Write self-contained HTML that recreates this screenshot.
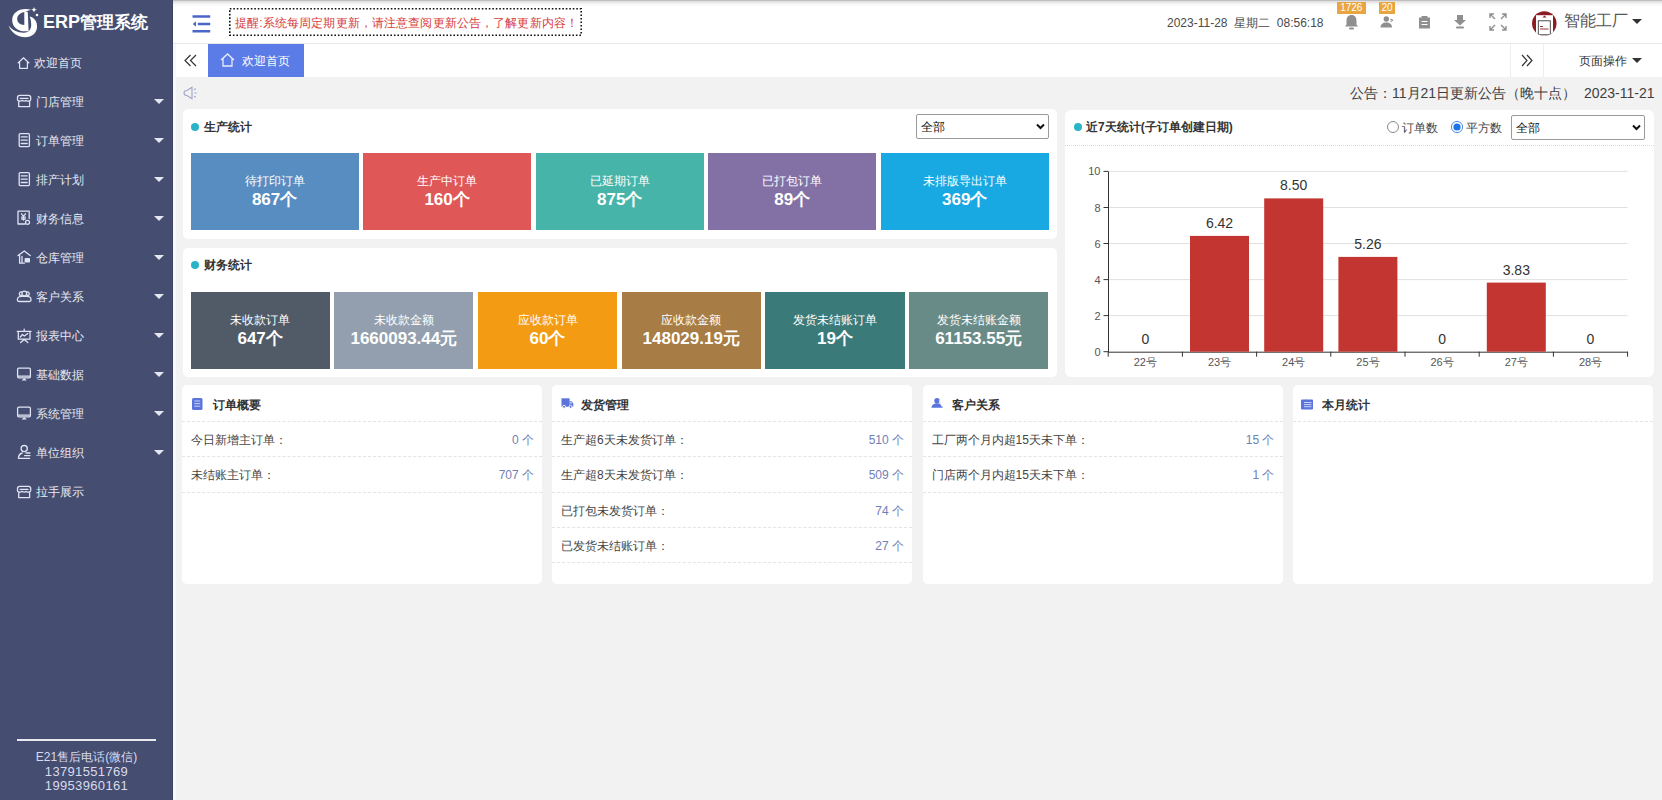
<!DOCTYPE html>
<html><head><meta charset="utf-8">
<style>
*{margin:0;padding:0;box-sizing:border-box}
html,body{width:1662px;height:800px;overflow:hidden;background:#f2f2f2;font-family:"Liberation Sans",sans-serif;color:#333;font-size:12px}
.abs{position:absolute}
#side{position:absolute;left:0;top:0;width:173px;height:800px;background:#454d70}
#logo{position:absolute;left:43px;top:11px;color:#fff;font-weight:bold;font-size:18px;line-height:22px;white-space:nowrap}#logo span{font-size:17px}
.mi{position:absolute;left:0;width:173px;height:39px;color:#e6e8f0;font-size:12px}
.mi .ic{position:absolute;left:17px;top:14.5px;width:13px;height:13px}
.mi .tx{position:absolute;left:34px;top:1.5px;line-height:39px}
.mi .car{position:absolute;left:154px;top:18px;width:0;height:0;border-left:5px solid transparent;border-right:5px solid transparent;border-top:5px solid #e6e8f0}
#foot{position:absolute;left:0;top:739px;width:173px}
#foot .ln{position:absolute;left:17px;top:0;width:139px;height:2px;background:#e8e8ee}
#foot .t{position:absolute;left:0;width:173px;text-align:center;color:#d8dbee;font-size:12px;line-height:14px}
#hdr{position:absolute;left:173px;top:0;width:1489px;height:44px;background:#fff;border-bottom:1px solid #e8e8e8}
#hdr .shadow{position:absolute;left:0;top:0;width:100%;height:8px;background:linear-gradient(#b0b0b0,#e0e0e0 1.5px,#f6f6f6 4px,#fff 7px)}
#notice{position:absolute;left:229px;top:9px;width:353px;height:28px;color:#d63c3c;font-size:12px;line-height:28px;padding-left:6px;white-space:nowrap;letter-spacing:0.13px}
#tabs{position:absolute;left:173px;top:44px;width:1489px;height:33px;background:#fff}
.card{position:absolute;background:#fff;border-radius:6px}
.ctitle{position:absolute;font-weight:bold;font-size:12px;color:#333;white-space:nowrap}
.dot{position:absolute;width:8px;height:8px;border-radius:50%;background:#2bb4c8}
.box{position:absolute;color:#fff;text-align:center}
.box .l{position:absolute;left:0;width:100%;top:21px;font-size:12px;line-height:14px}
.box .v{position:absolute;left:0;width:100%;top:37px;font-size:17px;font-weight:bold;line-height:19px}
.sel{position:absolute;border:1px solid #9a9a9a;border-radius:2px;background:#fff;font-size:12px;color:#111;padding-left:4px;padding-top:1px}
.sel .chev{position:absolute;right:3.5px;top:8px;width:9px;height:7px}
.bc .ht{position:absolute;left:31px;top:12.5px;font-weight:bold;font-size:12px;line-height:14px}
.bc .hi{position:absolute;left:10px;top:13px}
.bc .sep{position:absolute;left:0;width:100%;height:0;border-top:1px dashed #e4e4e4}
.bc .row{position:absolute;left:9px;right:8px;height:35px;line-height:37px;font-size:12px;color:#444}
.bc .row .n{position:absolute;right:0;top:0;color:#6f80b8}
</style></head><body>

<div id="side">
  <svg class="abs" style="left:5px;top:3px" width="40" height="40" viewBox="0 0 40 40">
    <path d="M26 6.8 C18 4.5 8.5 7.5 7.3 15.5 C6.5 22 10.5 27 17 28.2 L23.6 28.2 L22.8 9.2 C22 8.6 20 8.8 19.2 9 C14.5 10 12 13 12.2 16.5 C12.4 19.5 15 21.8 19.3 22 L19.3 9 Z" fill="#fff" fill-rule="evenodd"/>
    <path d="M24.5 13.5 C29.5 14.5 32.5 19 32 24.5 C31.5 30 27 34.2 20.5 34.2 C13 34.2 6.5 30 3.5 22.5 C7 27 12.5 29.8 19 29.7 C24 29.5 26.5 26 26.2 21 C26 17.5 25.5 15 24.5 13.5 Z" fill="#fff"/>
    <path d="M29 4 L29.8 6 L31.8 6.8 L29.8 7.6 L29 9.6 L28.2 7.6 L26.2 6.8 L28.2 6 Z" fill="#fff"/>
    <circle cx="32" cy="12" r="1.3" fill="#fff"/>
  </svg>
  <div id="logo">ERP<span>管理系统</span></div>

  <div class="mi" style="top:42px"><svg class="abs" style="left:17px;top:14.5px" width="13" height="12" viewBox="0 0 13 12"><path d="M0.8 6.2 L6.5 0.8 L12.2 6.2 M2.6 4.8 V11.3 H10.4 V4.8" fill="none" stroke="#dfe3f3" stroke-width="1.2" stroke-linejoin="round"/></svg><span class="tx" style="left:33.7px">欢迎首页</span></div>
  <div class="mi" style="top:81px"><svg class="abs" style="left:12px;top:9px" width="20" height="20" viewBox="0 0 20 20"><path d="M7 11 Q5.5 11 5.5 9.5 V7.5 Q5.5 5.3 7.7 5.3 H16.5 Q18.7 5.3 18.7 7.5 V9.5 Q18.7 11 17.2 11 Q15.5 11.4 14.2 10.4 Q12.2 11.8 10.2 10.4 Q8.7 11.4 7 11 Z M8.2 8.4 H16 M6.7 11.8 V16.6 H17.6 V11.8" stroke="#dfe3f3" fill="none" stroke-width="1.3" stroke-linecap="round" stroke-linejoin="round"/></svg><span class="tx" style="left:35.5px">门店管理</span><i class="car"></i></div>
  <div class="mi" style="top:120px"><svg class="abs" style="left:12px;top:10px" width="20" height="20" viewBox="0 0 20 20"><rect x="7.2" y="3.6" width="10.2" height="13" rx="1" stroke="#dfe3f3" fill="none" stroke-width="1.3" stroke-linecap="round" stroke-linejoin="round"/><path d="M9.2 6.8 H15.2 M9.2 10.2 H15.2 M9.2 13.5 H15.2" stroke="#dfe3f3" fill="none" stroke-width="1.3" stroke-linecap="round" stroke-linejoin="round" stroke-width="1.1"/></svg><span class="tx" style="left:35.5px">订单管理</span><i class="car"></i></div>
  <div class="mi" style="top:159px"><svg class="abs" style="left:12px;top:10px" width="20" height="20" viewBox="0 0 20 20"><rect x="7.2" y="3.6" width="10.2" height="13" rx="1" stroke="#dfe3f3" fill="none" stroke-width="1.3" stroke-linecap="round" stroke-linejoin="round"/><path d="M9.2 6.8 H15.2 M9.2 10.2 H15.2 M9.2 13.5 H15.2" stroke="#dfe3f3" fill="none" stroke-width="1.3" stroke-linecap="round" stroke-linejoin="round" stroke-width="1.1"/></svg><span class="tx" style="left:35.5px">排产计划</span><i class="car"></i></div>
  <div class="mi" style="top:198px"><svg class="abs" style="left:12px;top:9px" width="20" height="20" viewBox="0 0 20 20"><path d="M13 17 H6 V4.2 H17.2 V11.5" stroke="#dfe3f3" fill="none" stroke-width="1.3" stroke-linecap="round" stroke-linejoin="round"/><path d="M9.5 6.8 L11.5 9.2 L13.5 6.8 M11.5 9.2 V13 M9.6 10.2 H13.4 M9.6 12 H13.4" stroke="#dfe3f3" fill="none" stroke-width="1.3" stroke-linecap="round" stroke-linejoin="round" stroke-width="1.1"/><circle cx="15.5" cy="15.3" r="2" stroke="#dfe3f3" fill="none" stroke-width="1.3" stroke-linecap="round" stroke-linejoin="round" stroke-width="1.5"/></svg><span class="tx" style="left:35.5px">财务信息</span><i class="car"></i></div>
  <div class="mi" style="top:237px"><svg class="abs" style="left:12px;top:10px" width="20" height="20" viewBox="0 0 20 20"><path d="M6 8.6 L12.3 4 L18.2 8.6 M7.6 8 V16.2 H12.4 M10 9.5 V15" stroke="#dfe3f3" fill="none" stroke-width="1.3" stroke-linecap="round" stroke-linejoin="round"/><rect x="12.6" y="11" width="5.4" height="4.6" rx="0.8" fill="#dfe3f3"/></svg><span class="tx" style="left:35.5px">仓库管理</span><i class="car"></i></div>
  <div class="mi" style="top:276px"><svg class="abs" style="left:12px;top:10px" width="20" height="20" viewBox="0 0 20 20"><circle cx="12.3" cy="7.6" r="2.4" stroke="#dfe3f3" fill="none" stroke-width="1.3" stroke-linecap="round" stroke-linejoin="round"/><path d="M9.3 9.5 Q7 9.6 7.4 7.3 Q7.8 5.6 9.6 6 M15.3 9.5 Q17.6 9.6 17.2 7.3 Q16.8 5.6 15 6" stroke="#dfe3f3" fill="none" stroke-width="1.3" stroke-linecap="round" stroke-linejoin="round" stroke-width="1.1"/><path d="M7.5 15.5 Q5.2 15.5 5.4 13.3 Q5.8 10.3 9.5 10.3 H15 Q18.7 10.3 19 13.3 Q19.2 15.5 17 15.5 Z" stroke="#dfe3f3" fill="none" stroke-width="1.3" stroke-linecap="round" stroke-linejoin="round"/></svg><span class="tx" style="left:35.5px">客户关系</span><i class="car"></i></div>
  <div class="mi" style="top:315px"><svg class="abs" style="left:12px;top:9px" width="20" height="20" viewBox="0 0 20 20"><path d="M5.3 7.4 H19 M6.3 7.4 V15.2 H18 V7.4 M12.2 5.2 V7.2 M12.2 15.5 L8.6 18.6 M12.2 15.5 L15.8 18.6" stroke="#dfe3f3" fill="none" stroke-width="1.3" stroke-linecap="round" stroke-linejoin="round"/><path d="M8.3 13 L10.5 10.5 L12.3 12 L15.8 9.5" stroke="#dfe3f3" fill="none" stroke-width="1.3" stroke-linecap="round" stroke-linejoin="round" stroke-width="1"/></svg><span class="tx" style="left:35.5px">报表中心</span><i class="car"></i></div>
  <div class="mi" style="top:354px"><svg class="abs" style="left:12px;top:10px" width="20" height="20" viewBox="0 0 20 20"><rect x="5.6" y="4.2" width="12.8" height="9.6" rx="1.2" stroke="#dfe3f3" fill="none" stroke-width="1.3" stroke-linecap="round" stroke-linejoin="round" stroke-width="1.5"/><path d="M6.5 12.2 H17.5" stroke="#dfe3f3" fill="none" stroke-width="1.3" stroke-linecap="round" stroke-linejoin="round" stroke-width="1"/><path d="M9.5 16.6 L12.2 14 L14.8 16.6 Z" fill="#dfe3f3"/></svg><span class="tx" style="left:35.5px">基础数据</span><i class="car"></i></div>
  <div class="mi" style="top:393px"><svg class="abs" style="left:12px;top:10px" width="20" height="20" viewBox="0 0 20 20"><rect x="5.6" y="4.2" width="12.8" height="9.6" rx="1.2" stroke="#dfe3f3" fill="none" stroke-width="1.3" stroke-linecap="round" stroke-linejoin="round" stroke-width="1.5"/><path d="M6.5 12.2 H17.5" stroke="#dfe3f3" fill="none" stroke-width="1.3" stroke-linecap="round" stroke-linejoin="round" stroke-width="1"/><path d="M9.5 16.6 L12.2 14 L14.8 16.6 Z" fill="#dfe3f3"/></svg><span class="tx" style="left:35.5px">系统管理</span><i class="car"></i></div>
  <div class="mi" style="top:432px"><svg class="abs" style="left:12px;top:10px" width="20" height="20" viewBox="0 0 20 20"><circle cx="12.2" cy="6.6" r="3.1" stroke="#dfe3f3" fill="none" stroke-width="1.3" stroke-linecap="round" stroke-linejoin="round"/><path d="M10.2 11 Q6.6 12 6.4 16.4 H17.6 M14 11 H18 M12.6 13.6 H18" stroke="#dfe3f3" fill="none" stroke-width="1.3" stroke-linecap="round" stroke-linejoin="round"/></svg><span class="tx" style="left:35.5px">单位组织</span><i class="car"></i></div>
  <div class="mi" style="top:471px"><svg class="abs" style="left:12px;top:10px" width="20" height="20" viewBox="0 0 20 20"><path d="M7 11 Q5.5 11 5.5 9.5 V7.5 Q5.5 5.3 7.7 5.3 H16.5 Q18.7 5.3 18.7 7.5 V9.5 Q18.7 11 17.2 11 Q15.5 11.4 14.2 10.4 Q12.2 11.8 10.2 10.4 Q8.7 11.4 7 11 Z M8.2 8.4 H16 M6.7 11.8 V16.6 H17.6 V11.8" stroke="#dfe3f3" fill="none" stroke-width="1.3" stroke-linecap="round" stroke-linejoin="round"/></svg><span class="tx" style="left:35.5px">拉手展示</span></div>

  <div id="foot">
    <div class="ln"></div>
    <div class="t" style="top:10.5px">E21售后电话(微信)</div>
    <div class="t" style="top:25.5px;font-size:13px;letter-spacing:0.35px">13791551769</div>
    <div class="t" style="top:39.5px;font-size:13px;letter-spacing:0.35px">19953960161</div>
  </div>
</div>

<div id="hdr"><div class="shadow"></div></div>
<svg class="abs" style="left:192px;top:15px" width="19" height="18" viewBox="0 0 19 18">
  <path d="M0.5 1.5H18.2 M5.8 9H18.2 M0.5 16.2H18.2" stroke="#4b66c9" stroke-width="2.4"/>
  <path d="M0.8 9L4 6.2V11.8Z" fill="#4b66c9"/>
</svg>
<svg class="abs" style="left:229px;top:8px" width="353" height="28"><rect x="0.8" y="0.8" width="351.4" height="26.4" fill="none" stroke="#111" stroke-width="1.6" stroke-dasharray="1.6 1.9"/></svg><div id="notice">提醒:系统每周定期更新，请注意查阅更新公告，了解更新内容！</div>

<div class="abs" style="left:1167px;top:16px;font-size:12px;color:#4a4a4a;line-height:14px;white-space:nowrap">2023-11-28&nbsp; 星期二&nbsp; 08:56:18</div>


<!-- header right -->
<svg class="abs" style="left:1344px;top:14px" width="15" height="16" viewBox="0 0 15 16"><path d="M7.5 1 C4 1 2.5 3.5 2.5 7 V10.5 L1 12.5 H14 L12.5 10.5 V7 C12.5 3.5 11 1 7.5 1Z" fill="#8f8f8f"/><rect x="5" y="13.5" width="5" height="2" rx="1" fill="#8f8f8f"/></svg>
<div class="abs" style="left:1337px;top:2px;width:28.5px;height:11.5px;background:#e9a53f;color:#fff;font-size:10px;line-height:12px;text-align:center">1726</div>
<svg class="abs" style="left:1380px;top:15px" width="15" height="13" viewBox="0 0 15 13"><circle cx="6.3" cy="4" r="2.7" fill="#8f8f8f"/><path d="M0.5 12.5 C0.5 9 3 7.5 6.3 7.5 C9.6 7.5 12 9 12 12.5Z" fill="#8f8f8f"/><path d="M10.5 4L12.5 5.2L10.5 6.4" fill="none" stroke="#8f8f8f" stroke-width="1.2"/></svg>
<div class="abs" style="left:1379px;top:2px;width:16px;height:11.5px;background:#e9a53f;color:#fff;font-size:10px;line-height:12px;text-align:center">20</div>
<svg class="abs" style="left:1418px;top:15px" width="13" height="14" viewBox="0 0 13 14"><path d="M1 2.5H3.5V1H9.5V2.5H12V13.5H1Z" fill="#8f8f8f"/><path d="M3.5 6.5H9.5 M3.5 9.5H9.5" stroke="#fff" stroke-width="1.2"/></svg>
<svg class="abs" style="left:1453px;top:14px" width="14" height="15" viewBox="0 0 14 15"><path d="M4 1H10V6H13L7 11.5L1 6H4Z" fill="#8f8f8f"/><rect x="3" y="12.5" width="8" height="2" rx="1" fill="#8f8f8f"/></svg>
<svg class="abs" style="left:1489px;top:13px" width="18" height="18" viewBox="0 0 18 18" fill="none" stroke="#8f8f8f" stroke-width="1.4"><path d="M1 5V1H5 M1 1L6 6 M13 1H17V5 M17 1L12 6 M1 13V17H5 M1 17L6 12 M17 13V17H13 M17 17L12 12"/></svg>
<svg class="abs" style="left:1531px;top:9.5px" width="27" height="27" viewBox="0 0 27 27"><defs><clipPath id="cc"><circle cx="13.3" cy="13.5" r="12.25"/></clipPath></defs><circle cx="13.3" cy="13.5" r="12.25" fill="#8e1b23"/><g clip-path="url(#cc)"><rect x="5" y="5.2" width="17" height="22" fill="#fff"/><rect x="7.3" y="10.8" width="12" height="14" fill="none" stroke="#3a3a3a" stroke-width="0.9"/><path d="M9 16.5H12 M9 19H17.5" stroke="#8e1b23" stroke-width="0.9"/><path d="M11.5 7.5L13.5 5.5L15.5 7.5Z" fill="#8e1b23"/></g></svg>
<div class="abs" style="left:1564px;top:12px;font-size:16px;color:#555;line-height:18px;white-space:nowrap">智能工厂</div>
<div class="abs" style="left:1632px;top:19px;width:0;height:0;border-left:5px solid transparent;border-right:5px solid transparent;border-top:5px solid #333"></div>

<!-- tabs -->
<div id="tabs"></div>
<svg class="abs" style="left:184px;top:54px" width="13" height="13" viewBox="0 0 13 13" fill="none" stroke="#333" stroke-width="1.2"><path d="M6.5 1L1 6.5L6.5 12 M12 1L6.5 6.5L12 12"/></svg>
<div class="abs" style="left:208px;top:44px;width:96px;height:33px;background:#5b7ce6"></div>
<svg class="abs" style="left:220px;top:53px" width="15" height="14" viewBox="0 0 15 14" fill="none" stroke="#e8ecfb" stroke-width="1.3"><path d="M1 7L7.5 1L14 7 M3 5.5V13H12V5.5"/></svg>
<div class="abs" style="left:242px;top:54px;color:#fff;font-size:12px;line-height:14px">欢迎首页</div>
<div class="abs" style="left:1509.5px;top:44px;width:1px;height:33px;background:#eee"></div>
<div class="abs" style="left:1543px;top:44px;width:1px;height:33px;background:#eee"></div>
<svg class="abs" style="left:1521px;top:54px" width="12" height="13" viewBox="0 0 12 13" fill="none" stroke="#333" stroke-width="1.2"><path d="M1 1L6 6.5L1 12 M6 1L11 6.5L6 12"/></svg>
<div class="abs" style="left:1579px;top:54px;color:#333;font-size:12px;line-height:14px">页面操作</div>
<div class="abs" style="left:1632px;top:58px;width:0;height:0;border-left:5px solid transparent;border-right:5px solid transparent;border-top:5px solid #333"></div>

<!-- announcement -->
<svg class="abs" style="left:183px;top:86px" width="15" height="14" viewBox="0 0 15 14" fill="none" stroke="#a0a4c8" stroke-width="1.1"><path d="M4 4.5Q1 4.5 1 7Q1 9.5 4 9.5L9 12.8V1.2Z"/><path d="M11 3.8L12.8 2.8 M11.4 7H13.6 M11 10.2L12.8 11.2"/></svg>
<div class="abs" style="left:1350px;top:85px;color:#404040;font-size:14px;line-height:16px;white-space:nowrap">公告：11月21日更新公告（晚十点）&nbsp; 2023-11-21</div>


<!-- production card -->
<div class="card" style="left:183px;top:109px;width:874px;height:130px;border-radius:5px"></div>
<div class="dot" style="left:191px;top:123px"></div>
<div class="ctitle" style="left:204px;top:120px;line-height:14px">生产统计</div>
<div class="sel" style="left:916px;top:114px;width:133px;height:25px;line-height:23px">全部<svg class="chev" width="9" height="7"><path d="M1 1.5L4.5 5L8 1.5" fill="none" stroke="#111" stroke-width="2"/></svg></div>
<div class="box" style="left:190.5px;top:153px;width:168.2px;height:77px;background:#588dc1"><div class="l">待打印订单</div><div class="v">867个</div></div>
<div class="box" style="left:363.0px;top:153px;width:168.2px;height:77px;background:#e05757"><div class="l">生产中订单</div><div class="v">160个</div></div>
<div class="box" style="left:535.6px;top:153px;width:168.2px;height:77px;background:#47b4a9"><div class="l">已延期订单</div><div class="v">875个</div></div>
<div class="box" style="left:708.1px;top:153px;width:168.2px;height:77px;background:#8371a6"><div class="l">已打包订单</div><div class="v">89个</div></div>
<div class="box" style="left:880.7px;top:153px;width:168.2px;height:77px;background:#18a8e2"><div class="l">未排版导出订单</div><div class="v">369个</div></div>

<!-- finance card -->
<div class="card" style="left:183px;top:248px;width:874px;height:129px;border-radius:5px"></div>
<div class="dot" style="left:191px;top:261px"></div>
<div class="ctitle" style="left:204px;top:258px;line-height:14px">财务统计</div>
<div class="box" style="left:190.5px;top:292px;width:139.3px;height:77px;background:#505b67"><div class="l">未收款订单</div><div class="v">647个</div></div>
<div class="box" style="left:334.2px;top:292px;width:139.3px;height:77px;background:#939fae"><div class="l">未收款金额</div><div class="v">1660093.44元</div></div>
<div class="box" style="left:477.9px;top:292px;width:139.3px;height:77px;background:#f39b12"><div class="l">应收款订单</div><div class="v">60个</div></div>
<div class="box" style="left:621.6px;top:292px;width:139.3px;height:77px;background:#a77d45"><div class="l">应收款金额</div><div class="v">148029.19元</div></div>
<div class="box" style="left:765.3px;top:292px;width:139.3px;height:77px;background:#3a7a78"><div class="l">发货未结账订单</div><div class="v">19个</div></div>
<div class="box" style="left:909.0px;top:292px;width:139.3px;height:77px;background:#688b88"><div class="l">发货未结账金额</div><div class="v">61153.55元</div></div>


<!-- chart card -->
<div class="card" style="left:1065px;top:110px;width:589px;height:267px"></div>
<div class="dot" style="left:1074px;top:123px"></div>
<div class="ctitle" style="left:1086px;top:120px;line-height:14px">近7天统计(子订单创建日期)</div>
<div class="abs" style="left:1387px;top:121px;width:12px;height:12px;border:1px solid #8a8a8a;border-radius:50%;background:#fff"></div>
<div class="abs" style="left:1402px;top:121px;font-size:12px;line-height:14px;color:#444">订单数</div>
<svg class="abs" style="left:1450px;top:120px" width="14" height="14"><circle cx="7" cy="7" r="5.6" fill="#fff" stroke="#4d8fe8" stroke-width="1"/><circle cx="7" cy="7" r="3.6" fill="#1a73e8"/></svg>
<div class="abs" style="left:1466px;top:121px;font-size:12px;line-height:14px;color:#444">平方数</div>
<div class="sel" style="left:1511px;top:115px;width:134px;height:24.5px;line-height:22px">全部<svg class="chev" style="top:7.5px" width="9" height="7"><path d="M1 1.5L4.5 5L8 1.5" fill="none" stroke="#111" stroke-width="2"/></svg></div>
<div class="abs" style="left:1065px;top:145px;width:589px;height:0;border-top:1px dotted #d9d9d9"></div>
<svg class="abs" style="left:0;top:0" width="1662" height="800" viewBox="0 0 1662 800" font-family="Liberation Sans, sans-serif">
<line x1="1108" y1="315.6" x2="1627.5" y2="315.6" stroke="#e0e0e0" stroke-width="1"/>
<line x1="1108" y1="279.6" x2="1627.5" y2="279.6" stroke="#e0e0e0" stroke-width="1"/>
<line x1="1108" y1="243.5" x2="1627.5" y2="243.5" stroke="#e0e0e0" stroke-width="1"/>
<line x1="1108" y1="207.5" x2="1627.5" y2="207.5" stroke="#e0e0e0" stroke-width="1"/>
<line x1="1108" y1="171.4" x2="1627.5" y2="171.4" stroke="#e0e0e0" stroke-width="1"/>
<line x1="1103.5" y1="351.7" x2="1108" y2="351.7" stroke="#333" stroke-width="1"/>
<text x="1100.5" y="355.7" text-anchor="end" font-size="11" fill="#555">0</text>
<line x1="1103.5" y1="315.6" x2="1108" y2="315.6" stroke="#333" stroke-width="1"/>
<text x="1100.5" y="319.6" text-anchor="end" font-size="11" fill="#555">2</text>
<line x1="1103.5" y1="279.6" x2="1108" y2="279.6" stroke="#333" stroke-width="1"/>
<text x="1100.5" y="283.6" text-anchor="end" font-size="11" fill="#555">4</text>
<line x1="1103.5" y1="243.5" x2="1108" y2="243.5" stroke="#333" stroke-width="1"/>
<text x="1100.5" y="247.5" text-anchor="end" font-size="11" fill="#555">6</text>
<line x1="1103.5" y1="207.5" x2="1108" y2="207.5" stroke="#333" stroke-width="1"/>
<text x="1100.5" y="211.5" text-anchor="end" font-size="11" fill="#555">8</text>
<line x1="1103.5" y1="171.4" x2="1108" y2="171.4" stroke="#333" stroke-width="1"/>
<text x="1100.5" y="175.4" text-anchor="end" font-size="11" fill="#555">10</text>
<line x1="1108.5" y1="171.4" x2="1108.5" y2="352.2" stroke="#333" stroke-width="1"/>
<line x1="1108" y1="352.2" x2="1628" y2="352.2" stroke="#333" stroke-width="1"/>
<line x1="1108.2" y1="351.7" x2="1108.2" y2="356.7" stroke="#333" stroke-width="1"/>
<line x1="1182.4" y1="351.7" x2="1182.4" y2="356.7" stroke="#333" stroke-width="1"/>
<line x1="1256.6" y1="351.7" x2="1256.6" y2="356.7" stroke="#333" stroke-width="1"/>
<line x1="1330.8" y1="351.7" x2="1330.8" y2="356.7" stroke="#333" stroke-width="1"/>
<line x1="1405.0" y1="351.7" x2="1405.0" y2="356.7" stroke="#333" stroke-width="1"/>
<line x1="1479.2" y1="351.7" x2="1479.2" y2="356.7" stroke="#333" stroke-width="1"/>
<line x1="1553.4" y1="351.7" x2="1553.4" y2="356.7" stroke="#333" stroke-width="1"/>
<line x1="1627.6" y1="351.7" x2="1627.6" y2="356.7" stroke="#333" stroke-width="1"/>
<text x="1145.3" y="365.7" text-anchor="middle" font-size="11" fill="#555">22号</text>
<text x="1145.3" y="343.7" text-anchor="middle" font-size="14" fill="#333">0</text>
<text x="1219.5" y="365.7" text-anchor="middle" font-size="11" fill="#555">23号</text>
<rect x="1190.0" y="235.9" width="59" height="115.8" fill="#c23531"/>
<text x="1219.5" y="227.9" text-anchor="middle" font-size="14" fill="#333">6.42</text>
<text x="1293.7" y="365.7" text-anchor="middle" font-size="11" fill="#555">24号</text>
<rect x="1264.2" y="198.4" width="59" height="153.3" fill="#c23531"/>
<text x="1293.7" y="190.4" text-anchor="middle" font-size="14" fill="#333">8.50</text>
<text x="1367.9" y="365.7" text-anchor="middle" font-size="11" fill="#555">25号</text>
<rect x="1338.4" y="256.9" width="59" height="94.8" fill="#c23531"/>
<text x="1367.9" y="248.9" text-anchor="middle" font-size="14" fill="#333">5.26</text>
<text x="1442.1" y="365.7" text-anchor="middle" font-size="11" fill="#555">26号</text>
<text x="1442.1" y="343.7" text-anchor="middle" font-size="14" fill="#333">0</text>
<text x="1516.3" y="365.7" text-anchor="middle" font-size="11" fill="#555">27号</text>
<rect x="1486.8" y="282.6" width="59" height="69.1" fill="#c23531"/>
<text x="1516.3" y="274.6" text-anchor="middle" font-size="14" fill="#333">3.83</text>
<text x="1590.5" y="365.7" text-anchor="middle" font-size="11" fill="#555">28号</text>
<text x="1590.5" y="343.7" text-anchor="middle" font-size="14" fill="#333">0</text>
</svg><div class="card bc" style="left:182px;top:385px;width:360px;height:199px;border-radius:5px"><div class="hi" style="left:10px;top:12.6px"><svg width="11" height="12" viewBox="0 0 11 12"><rect x="0" y="0" width="10.5" height="12" rx="1.5" fill="#5b74dc"/><path d="M2.3 3H8.2 M2.3 5.6H8.2 M2.3 8.2H8.2" stroke="#d6defb" stroke-width="0.9"/></svg></div><div class="ht">订单概要</div><div class="sep" style="top:36.0px"></div><div class="row" style="top:37.0px">今日新增主订单：<span class="n">0 个</span></div><div class="sep" style="top:71.3px"></div><div class="row" style="top:72.3px">未结账主订单：<span class="n">707 个</span></div><div class="sep" style="top:106.6px"></div></div>
<div class="card bc" style="left:552px;top:385px;width:360px;height:199px;border-radius:5px"><div class="hi" style="left:9px;top:13px"><svg width="13" height="11" viewBox="0 0 13 11"><path d="M0.5 0.3H8.6V8.8H0.5Z" fill="#5b74dc"/><path d="M8.6 3.2H10.6L12.3 5.5V8.8H8.6Z" fill="#5b74dc"/><path d="M9.3 4H10.2L11.3 5.6H9.3Z" fill="#dfe6fb"/><circle cx="3" cy="8.8" r="1.5" fill="#5b74dc" stroke="#fff" stroke-width="0.9"/><circle cx="9.6" cy="8.8" r="1.5" fill="#5b74dc" stroke="#fff" stroke-width="0.9"/></svg></div><div class="ht" style="left:29px">发货管理</div><div class="sep" style="top:36.0px"></div><div class="row" style="top:37.0px">生产超6天未发货订单：<span class="n">510 个</span></div><div class="sep" style="top:71.3px"></div><div class="row" style="top:72.3px">生产超8天未发货订单：<span class="n">509 个</span></div><div class="sep" style="top:106.6px"></div><div class="row" style="top:107.6px">已打包未发货订单：<span class="n">74 个</span></div><div class="sep" style="top:141.9px"></div><div class="row" style="top:142.9px">已发货未结账订单：<span class="n">27 个</span></div><div class="sep" style="top:177.2px"></div></div>
<div class="card bc" style="left:922.5px;top:385px;width:360px;height:199px;border-radius:5px"><div class="hi" style="left:8.5px;top:13px"><svg width="12" height="11" viewBox="0 0 12 11"><circle cx="6" cy="2.8" r="2.7" fill="#5b74dc"/><path d="M0.3 9.8C0.8 6.8 3 5.3 6 5.3C9 5.3 11.2 6.8 11.7 9.8Z" fill="#5b74dc"/><path d="M8.2 2.2L10.8 8.5" stroke="#e3e9fc" stroke-width="1"/></svg></div><div class="ht" style="left:29px">客户关系</div><div class="sep" style="top:36.0px"></div><div class="row" style="top:37.0px">工厂两个月内超15天未下单：<span class="n">15 个</span></div><div class="sep" style="top:71.3px"></div><div class="row" style="top:72.3px">门店两个月内超15天未下单：<span class="n">1 个</span></div><div class="sep" style="top:106.6px"></div></div>
<div class="card bc" style="left:1293px;top:385px;width:360px;height:199px;border-radius:5px"><div class="hi" style="left:8px;top:13.8px"><svg width="12" height="11" viewBox="0 0 12 11"><path d="M0 1.5Q0 0.6 1 0.6H4Q5 0 6 0.6H11Q12 0.6 12 1.5V9.5Q12 10.5 11 10.5H1Q0 10.5 0 9.5Z" fill="#5b74dc"/><path d="M3 3.5H10.5 M3 5.6H10.5 M3 7.7H10.5" stroke="#d6defb" stroke-width="0.9"/></svg></div><div class="ht" style="left:29px">本月统计</div><div class="sep" style="top:36.0px"></div></div>

<div class="abs" style="left:172px;top:0;width:1px;height:800px;background:#3c4262"></div>
<div class="abs" style="left:173px;top:44px;width:2.5px;height:756px;background:#f7f7fd"></div>
</body></html>
